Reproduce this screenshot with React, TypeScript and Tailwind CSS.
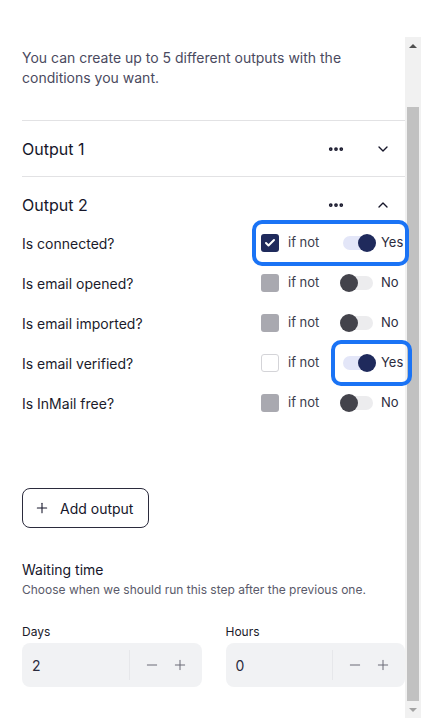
import { Plus, Minus, ChevronDown, ChevronUp, Ellipsis, Check } from "lucide-react"

type Cond = { label: string; checked: "on" | "off" | "empty"; yes: boolean }

const conditions: Cond[] = [
    { label: "Is connected?", checked: "on", yes: true },
    { label: "Is email opened?", checked: "off", yes: false },
    { label: "Is email imported?", checked: "off", yes: false },
    { label: "Is email verified?", checked: "empty", yes: true },
    { label: "Is InMail free?", checked: "off", yes: false },
]

function Box({ state }: { state: Cond["checked"] }) {
    if (state === "on") {
        return (
            <div className="flex items-center justify-center w-[18px] h-[18px] rounded-[3px] bg-[#1f2a5c]">
                <Check className="w-3 h-3 text-white" strokeWidth={4} />
            </div>
        )
    }
    if (state === "empty") {
        return <div className="w-[18px] h-[18px] rounded-[3px] border border-[#d4d4d8] bg-white" />
    }
    return <div className="w-[18px] h-[18px] rounded-[3px] bg-[#a9a9b0]" />
}

function Toggle({ on }: { on: boolean }) {
    return (
        <div className="relative w-[36px] h-[18px] flex items-center">
            <div className={`absolute left-[3px] right-[3px] h-[14px] rounded-full ${on ? "bg-[#e3e6f8]" : "bg-[#ececee]"}`} />
            <div className={`absolute w-[18px] h-[18px] rounded-full ${on ? "right-0 bg-[#1f2a5c]" : "left-0 bg-[#43434b]"}`} />
        </div>
    )
}

function Stepper({ label, value }: { label: string; value: string }) {
    return (
        <div className="flex-1 flex flex-col">
            <p className="text-[12px] text-[#1b1b2b] mb-[2px]">{label}</p>
            <div className="flex items-center h-[44px] rounded-[8px] bg-[#f1f2f4]">
                <span className="flex-1 pl-[10px] text-[14px] text-[#2b2b3d]">{value}</span>
                <div className="w-px h-[30px] bg-[#e6e7ea]" />
                <div className="flex items-center gap-[12px] px-[14px] text-[#6b6b76]">
                    <Minus className="w-[16px] h-[16px]" strokeWidth={1.5} />
                    <Plus className="w-[16px] h-[16px]" strokeWidth={1.5} />
                </div>
            </div>
        </div>
    )
}

export default function App() {
    return (
        <div className="w-[421px] h-[718px] bg-white overflow-hidden flex flex-col" style={{ fontFamily: "Inter, 'Noto Sans', sans-serif" }}>
            <div className="h-[37px] shrink-0" />
            <div className="flex flex-1 min-h-0">
                <div className="relative flex-1 flex flex-col pl-[22px]">
                    <p className="pt-[11px] pr-[30px] text-[14px] leading-[20px] text-[#4a4a60]">
                        You can create up to 5 different outputs with the conditions you want.
                    </p>

                    <div className="mt-[32px] border-t border-[#e2e2e4]">
                        <div className="flex items-center h-[55px]">
                            <span className="flex-1 text-[16px] text-[#16162a]">Output 1</span>
                            <Ellipsis className="w-[18px] h-[18px] text-[#16162a] mr-[30px]" strokeWidth={3} />
                            <ChevronDown className="w-[16px] h-[16px] text-[#16162a] mr-[14px]" strokeWidth={2} />
                        </div>
                    </div>

                    <div className="border-t border-[#e2e2e4]">
                        <div className="flex items-center h-[55px]">
                            <span className="flex-1 text-[16px] text-[#16162a]">Output 2</span>
                            <Ellipsis className="w-[18px] h-[18px] text-[#16162a] mr-[30px]" strokeWidth={3} />
                            <ChevronUp className="w-[16px] h-[16px] text-[#16162a] mr-[14px]" strokeWidth={2} />
                        </div>
                        <div className="-mt-[9px] flex flex-col">
                            {conditions.map((c) => (
                                <div key={c.label} className="flex items-center h-[40px] text-[14px]">
                                    <span className="flex-1 text-[#1b1b2b]">{c.label}</span>
                                    <div className="w-[144px] flex items-center">
                                        <Box state={c.checked} />
                                        <span className="ml-[9px] w-[52px] text-[13px] text-[#3c3c4c]">if not</span>
                                        <Toggle on={c.yes} />
                                        <span className="ml-[5px] text-[13px] text-[#2b2b3d]">{c.yes ? "Yes" : "No"}</span>
                                    </div>
                                </div>
                            ))}
                        </div>
                    </div>

                    <button className="mt-[65px] self-start flex items-center gap-[10px] h-[40px] pl-[11px] pr-[15px] border border-[#2b2b3d] rounded-[8px] text-[14px] text-[#16162a]">
                        <Plus className="w-[16px] h-[16px]" strokeWidth={1.6} />
                        Add output
                    </button>

                    <p className="mt-[31px] text-[14px] text-[#16162a]">Waiting time</p>
                    <p className="mt-[1px] text-[12px] text-[#5a5a6a]">Choose when we should run this step after the previous one.</p>

                    <div className="mt-[24px] flex gap-[24px]">
                        <Stepper label="Days" value="2" />
                        <Stepper label="Hours" value="0" />
                    </div>

                    {/* highlight annotations */}
                    <div className="absolute z-10 left-[252px] top-[183px] w-[157px] h-[46px] rounded-[10px] border-[4px] border-[#1a73f5]" />
                    <div className="absolute z-10 left-[331px] top-[303px] w-[81px] h-[46px] rounded-[10px] border-[4px] border-[#1a73f5]" />
                </div>

                <div className="w-[16px] shrink-0 flex flex-col items-center bg-[#f1f1f1]">
                    <div className="h-[17px] flex items-center justify-center">
                        <div className="w-0 h-0 border-x-[4px] border-x-transparent border-b-[4px] border-b-[#505050]" />
                    </div>
                    <div className="mt-[53px] w-[12px] flex-1 bg-[#c1c1c1]" />
                    <div className="h-[17px] flex items-center justify-center">
                        <div className="w-0 h-0 border-x-[4px] border-x-transparent border-t-[4px] border-t-[#a3a3a3]" />
                    </div>
                </div>
            </div>
        </div>
    )
}
